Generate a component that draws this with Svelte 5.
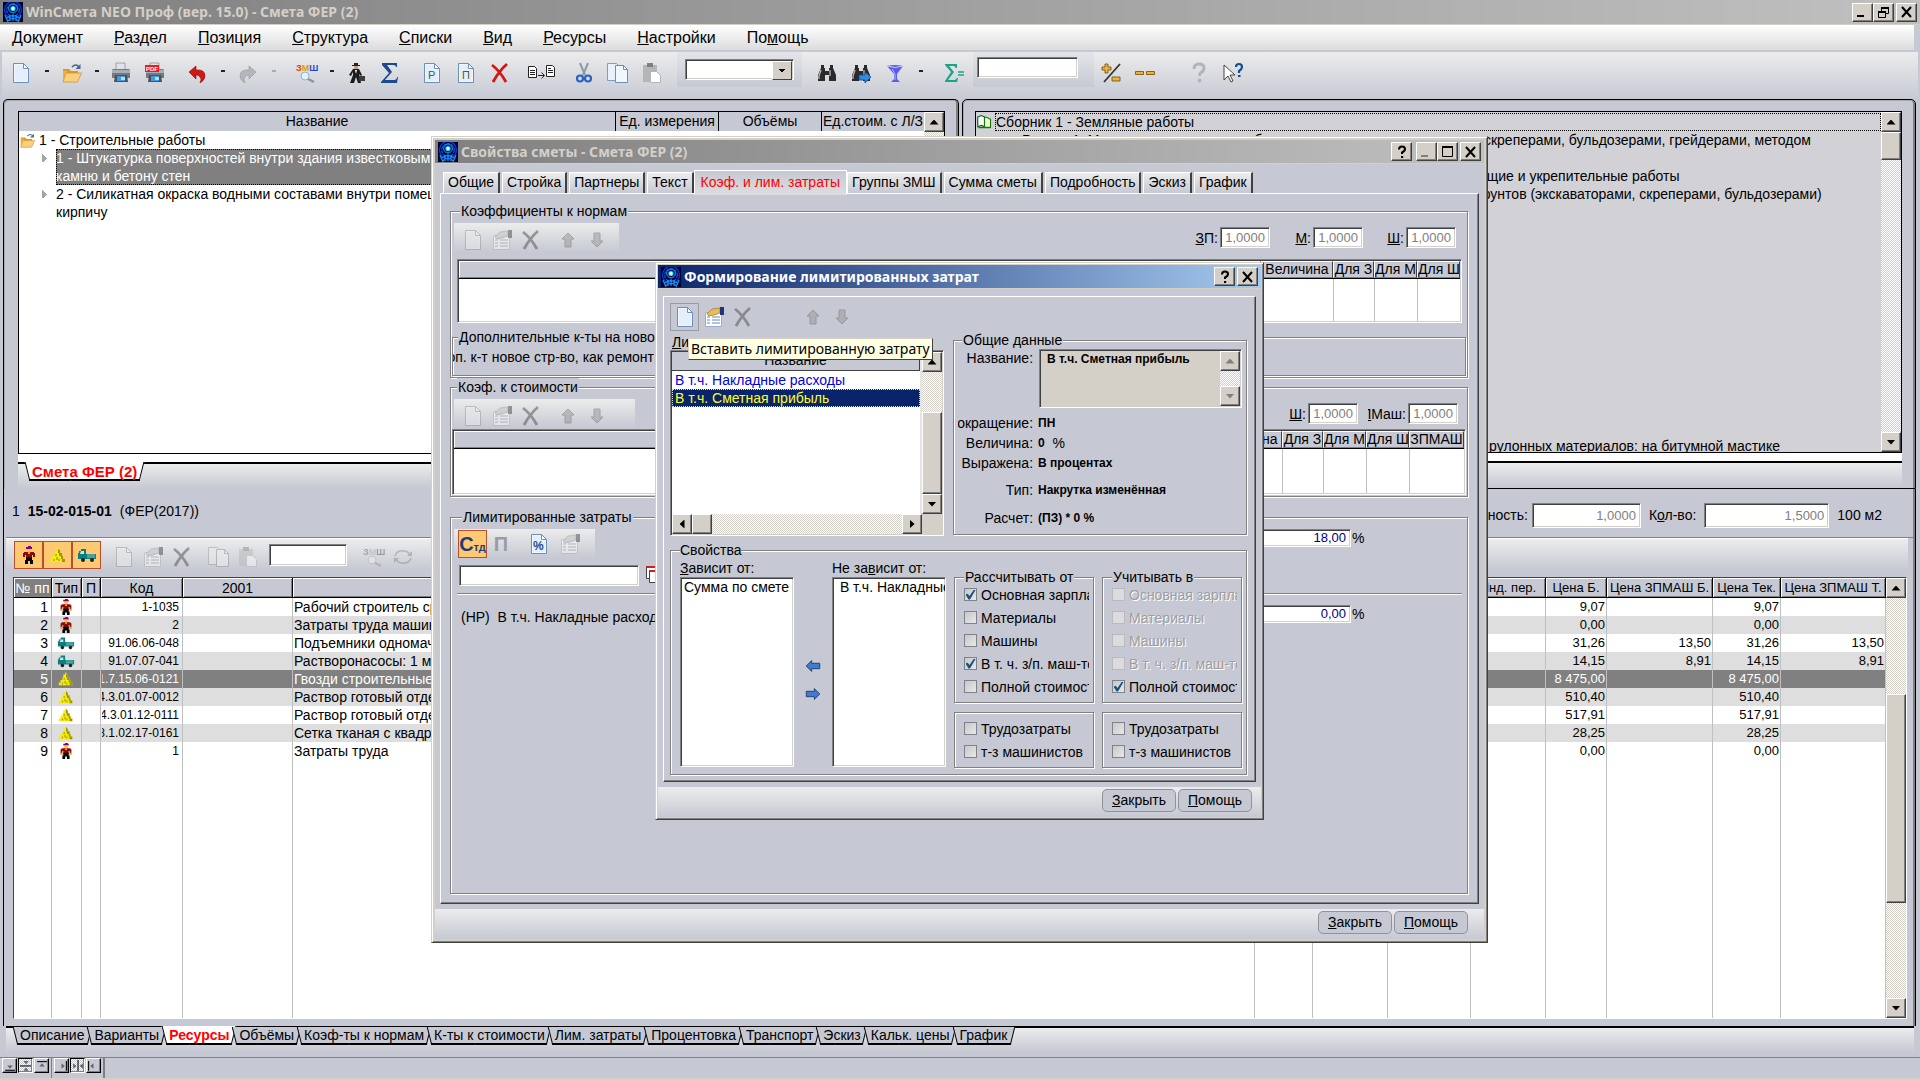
<script lang="ts">
	type Resource = { kind: string; code: string; name: string; base: string; baseZp: string; cur: string; curZp: string };

	const menu = ['&Документ', '&Раздел', '&Позиция', '&Структура', '&Списки', '&Вид', '&Ресурсы', '&Настройки', 'По&мощь'];

	const resources: Resource[] = [
		{ kind: 'worker', code: '1-1035', name: 'Рабочий строитель среднего разряда 3,5', base: '9,07', baseZp: '', cur: '9,07', curZp: '' },
		{ kind: 'worker', code: '2', name: 'Затраты труда машинистов', base: '0,00', baseZp: '', cur: '0,00', curZp: '' },
		{ kind: 'truck', code: '91.06.06-048', name: 'Подъемники одномачтовые, грузоподъемность до 500 кг', base: '31,26', baseZp: '13,50', cur: '31,26', curZp: '13,50' },
		{ kind: 'truck', code: '91.07.07-041', name: 'Растворонасосы: 1 м3/ч', base: '14,15', baseZp: '8,91', cur: '14,15', curZp: '8,91' },
		{ kind: 'heap', code: '01.7.15.06-0121', name: 'Гвозди строительные с плоской головкой', base: '8 475,00', baseZp: '', cur: '8 475,00', curZp: '' },
		{ kind: 'heap', code: '04.3.01.07-0012', name: 'Раствор готовый отделочный тяжелый', base: '510,40', baseZp: '', cur: '510,40', curZp: '' },
		{ kind: 'heap', code: '04.3.01.12-0111', name: 'Раствор готовый отделочный тяжелый', base: '517,91', baseZp: '', cur: '517,91', curZp: '' },
		{ kind: 'heap', code: '08.1.02.17-0161', name: 'Сетка тканая с квадратными ячейками', base: '28,25', baseZp: '', cur: '28,25', curZp: '' },
		{ kind: 'worker', code: '1', name: 'Затраты труда', base: '0,00', baseZp: '', cur: '0,00', curZp: '' }
	];
	const selectedRow = 4;

	const catalog = [
		'Раздел 1. Механизированная разработка всех грунтов экскаваторами, скреперами, бульдозерами, грейдерами, методом',
		'гидромеханизации',
		'Раздел 2. Другие виды земляных работ, подготовительные, сопутствующие и укрепительные работы',
		'Таблица 01-01-001. Разработка, перемещение и укладка нескальных грунтов (экскаваторами, скреперами, бульдозерами)',
		...Array(13).fill(''),
		'Устройство гидроизоляции фундаментов и подвалов из наплавляемых рулонных материалов: на битумной мастике'
	];

	const sheetTabs = ['Описание', 'Варианты', 'Ресурсы', 'Объёмы', 'Коэф-ты к нормам', 'К-ты к стоимости', 'Лим. затраты', 'Процентовка', 'Транспорт', 'Эскиз', 'Кальк. цены', 'График'];
	const propTabs = ['Общие', 'Стройка', 'Партнеры', 'Текст', 'Коэф. и лим. затраты', 'Группы ЗМШ', 'Сумма сметы', 'Подробность', 'Эскиз', 'График'];

	const calcFrom = [
		{ text: 'Основная зарплата', on: true },
		{ text: 'Материалы', on: false },
		{ text: 'Машины', on: false },
		{ text: 'В т. ч. з/п. маш-тов', on: true },
		{ text: 'Полной стоимости', on: false }
	];
	const countIn = calcFrom.map((c, i) => ({ text: c.text, on: i === 4, off: i !== 4 }));
	const labour = ['Трудозатраты', 'т-з машинистов'];
</script>

{#snippet mnemonic(s: string)}{@const i = s.indexOf('&')}{#if i < 0}{s}{:else}{s.slice(0, i)}<u>{s[i + 1]}</u>{s.slice(i + 2)}{/if}{/snippet}

{#snippet logo()}
	<svg class="logo" viewBox="0 0 20 20" aria-hidden="true">
		<rect width="20" height="20" fill="#00002c" />
		<g fill="none" stroke-width="1.200">
			<circle cx="10" cy="8" r="8.500" stroke="#0040f0" />
			<circle cx="10" cy="8" r="6.300" stroke="#0860ff" stroke-dasharray="3 1" />
			<path d="M4 16q6-5 12 0M5 18.500q5-4 10 0M2 13q2 5 3 7M18 13q-2 5-3 7M7 13v6M13 13v6M10 12v7" stroke="#1898ff" />
		</g>
		<circle cx="10" cy="6.500" r="4.400" fill="#001060" stroke="#20a8ff" />
		<circle cx="10" cy="6.500" r="2.600" fill="#28d8ff" />
		<circle cx="10" cy="6.500" r="1.400" fill="#fff" />
	</svg>
{/snippet}

{#snippet icon(name: string)}
	<svg class="icon" viewBox="0 0 20 20" aria-hidden="true">
		{#if name === 'new' || name === 'new-r' || name === 'new-p' || name === 'percent'}
			<path d="M2.500.500h10l5 5v14h-15z" fill="#f2f7fe" stroke="#6d8fc0" />
			<path d="M4 2v16h12V7h-4V2z" fill="#dfebfb" opacity=".7" />
			<path d="M12.500.500v5h5z" fill="#fff" stroke="#6d8fc0" />
			{#if name === 'new-r'}<text x="6" y="16" font-size="11" fill="#1a6a6a">Р</text>{/if}
			{#if name === 'new-p'}<text x="6" y="16" font-size="11" fill="#5a5a10">П</text>{/if}
			{#if name === 'percent'}<text x="4" y="16" font-size="12" font-weight="bold" fill="#1d4a90">%</text>{/if}
		{:else if name === 'open'}
			<path d="M1 6h6l2 2h7v4H1z" fill="#d99a2c" />
			<path d="M1 19V8h4v2h11l-3 9z" fill="#eeb048" />
			<path d="M4 10h15.500l-4 9H1z" fill="#fbd07c" stroke="#d8962c" stroke-width=".8" />
			<path d="M10 4q4-4 7 0" fill="none" stroke="#44688f" stroke-width="1.500" />
			<path d="M18.500 1v5h-5z" fill="#44688f" />
		{:else if name === 'print' || name === 'pdf'}
			<path d="M5 0h9v8H5z" fill="#dfe3e8" stroke="#888" stroke-width=".7" />
			<path d="M1 7q0-1 2-1h14q2 0 2 1v8H1z" fill="#74797f" />
			<path d="M1 7h18v3H1z" fill="#a9aeb4" />
			<path d="M4 12h12l1 7H3z" fill="#4c5157" />
			<path d="M6 13h8v5H6z" fill="#3f9be8" /><path d="M10 14h4v3h-4z" fill="#aee0ff" />
			{#if name === 'pdf'}
				<path d="M0 2h14v7H0z" fill="#f01c10" />
				<text x="1" y="8" font-size="6" font-weight="bold" fill="#fff">PDF</text>
			{/if}
		{:else if name === 'undo'}
			<path d="M2 9L9 3v4q9-1 9 6 0 4-5 7 2-4 0-6-1-2-4-2v4z" fill="#cf1717" stroke="#8a0808" stroke-width=".6" />
		{:else if name === 'redo'}
			<path d="M18 9L11 3v4q-9-1-9 6 0 4 5 7-2-4 0-6 1-2 4-2v4z" fill="#b4b7ba" stroke="#94979b" stroke-width=".6" />
		{:else if name === 'zmsh'}
			<text x="-1" y="8" font-size="9" font-weight="bold"><tspan fill="#e23a10">З</tspan><tspan fill="#d9a000">М</tspan><tspan fill="#1848d0">Ш</tspan></text>
			<circle cx="8" cy="13" r="4" fill="#e4f2ff" stroke="#8fb3d6" />
			<path d="M11 16l6 3" stroke="#8c96a0" stroke-width="2.500" />
		{:else if name === 'man'}
			<path d="M6 2h8v1H6zM8 0h4v2H8z" fill="#222" /><path d="M8 3h4v3H8z" fill="#c9a184" />
			<path d="M7 6h6l3 6-1 1-2-2 2 9h-3l-2-6-2 6H4l3-8V9l-2 4-2-1z" fill="#1b1b1b" />
			<path d="M9 7h2l-1 4z" fill="#fff" /><path d="M13 13h6v5h-6z" fill="#3c3c3c" />
		{:else if name === 'sigma'}
			<path d="M2 0h15v4h-1q0-2-3-2H7l5 7-7 8h9q3 0 3-3h1l-1 6H1v-1l8-9-7-8z" fill="#1c4a8c" />
		{:else if name === 'delete'}
			<path d="M2 2q8 6 14 17M17 1Q9 8 3 19" fill="none" stroke="#d41515" stroke-width="2.800" />
		{:else if name === 'transfer'}
			<path d="M-3.500 3.500h6l2 2v9h-8zM14.500 2.500h6l2 2v9h-8z" fill="#fff" stroke="#222" />
			<path d="M-2 7.500h5M-2 9.500h5M-2 11.500h5M16 5.500h3M16 7.500h5M16 9.500h5M6 12.500h6M9.500 9.500l3 3-3 3" fill="none" stroke="#222" />
		{:else if name === 'cut'}
			<path d="M6 0l5 12M14 0L9 12" stroke="#8d99a6" stroke-width="2" />
			<circle cx="6" cy="15.500" r="3" fill="none" stroke="#2a62c4" stroke-width="2.200" />
			<circle cx="14" cy="15.500" r="3" fill="none" stroke="#2a62c4" stroke-width="2.200" />
		{:else if name === 'copy'}
			<path d="M-.500.500h9l3 3v14h-12z" fill="#eaf1fb" stroke="#7f9cc4" />
			<path d="M7.500 2.500h8l4 4v13h-12z" fill="#f2f7fe" stroke="#6d8fc0" /><path d="M15.500 2.500v4h4z" fill="#fff" stroke="#6d8fc0" />
		{:else if name === 'paste'}
			<path d="M1 2h14v17H1z" fill="#b4b6ba" /><path d="M5 0h6v4H5z" fill="#7e8084" />
			<path d="M8.500 8.500h6l4 4v7h-10z" fill="#fff" stroke="#b4b4b8" />
		{:else if name === 'find' || name === 'find-next'}
			<path d="M4 2h3v3h1v3h4V5h1V2h3v3l3 7v6h-7v-6H8v6H1v-6l3-7z" fill="#2a2a2c" />
			<path d="M4 7l-2 6v3M13 7v6" stroke="#b8b8bc" stroke-width="1.300" fill="none" />
			{#if name === 'find-next'}<path d="M8 12h6V9l6 5-6 6v-3H8z" fill="#2f8ce4" stroke="#0c4a94" stroke-width=".8" />{/if}
		{:else if name === 'funnel'}
			<path d="M2 3q8-2 16 0l-6 8v5l3 3H6l3-3v-5z" fill="#5a5cf0" /><path d="M2 3q8 3 16 0" stroke="#c8caff" fill="none" />
			<path d="M7 6l3 5v6" stroke="#b4b6ff" fill="none" />
		{:else if name === 'sum'}
			<path d="M1 1h12v4h-1l-2-2H5l5 6-6 8h7l2-2h1l-1 4H1v-1l6-9-6-7z" fill="#1fa386" /><path d="M14 9h6M14 12h6" stroke="#1fa386" stroke-width="1.500" />
		{:else if name === 'plusminus'}
			<path d="M19 1L3 19" stroke="#333" stroke-width="1.800" />
			<path d="M4 1h3v3h3v3H7v3H4V7H1V4h3zM11 14h8v4h-8z" fill="#f0b232" stroke="#6a4c08" stroke-width=".8" />
		{:else if name === 'dashes'}
			<path d="M.500 8.500h8v3h-8zM11.500 8.500h8v3h-8z" fill="#f0b232" stroke="#6a4c08" stroke-width=".8" />
		{:else if name === 'help'}
			<path d="M5 6q0-5 5-5t5 4q0 3-3.500 5-1 1-1 3" fill="none" stroke="#b2b4b8" stroke-width="3" /><circle cx="10.500" cy="17.500" r="2" fill="#b2b4b8" />
		{:else if name === 'whatsthis'}
			<path d="M1 2v15l4-4 3 6 2-1-3-6h5z" fill="#fff" stroke="#333" stroke-width=".9" />
			<path d="M13 4q0-3 3-3t3 3q0 2-3 4v2" fill="none" stroke="#14508c" stroke-width="2.200" /><path d="M15 12h2.500v2H15z" fill="#14508c" />
		{:else if name === 'props'}
			<path d="M1.500 5.500h16v14h-16z" fill="#fff" stroke="#9aaed0" />
			<path d="M3 10h3M3 13h3M3 16h3M8 10h8M8 13h8M8 16h8" stroke="#6c86b4" />
			<path d="M3 7l5-5 8-1v5l-6 2-5 1z" fill="#e8bc58" stroke="#a47418" stroke-width=".7" /><path d="M16 0h4v8h-4z" fill="#22337c" />
		{:else if name === 'up' || name === 'down'}
			<path d={name === 'up' ? 'M10 3l6 6h-3v8H7V9H4z' : 'M10 17l6-6h-3V3H7v8H4z'} fill="#8e9094" stroke="#5c5e62" />
		{:else if name === 'left' || name === 'right'}
			<path d={name === 'left' ? 'M2.500 10l6-6v3h9v6h-9v3z' : 'M17.500 10l-6-6v3h-9v6h9v3z'} fill="#3f7cd0" stroke="#1f3a70" />
		{:else if name === 'refresh'}
			<path d="M2 9q2-6 9-5 4 0 6 4M18 11q-2 6-9 5-4 0-6-4" fill="none" stroke="#808288" stroke-width="1.500" />
			<path d="M19 4v5h-5zM1 16v-5h5z" fill="#808288" />
		{:else if name === 'worker'}
			<path d="M7 2h6v2H7zM9 1h3v1H9z" fill="#840084" /><path d="M8 4h4v3H8z" fill="#ffcc18" />
			<path d="M5 7h10v1h1v6h-2v-4h-1v3H7v-3H6v4H4V8h1z" fill="#8c0a0a" /><path d="M9 7h2v2H9z" fill="#f0a030" />
			<path d="M7 12h6v3h1v4h-3v-3H9v3H6v-4h1z" fill="#000" /><path d="M4 12h2v2H4zM14 12h2v2h-2z" fill="#ffcc18" />
		{:else if name === 'heap'}
			<path d="M9 3h2v2h1v3h2v3h1v3h2v3H2v-3h2v-3h2V8h1V5h2z" fill="#f4ec10" />
			<path d="M11 4v1h1v3h2v3h1v3h2v3h-3v-3h-1v-3h-2V8h-1V4z" fill="#a09408" />
			<path d="M8 9v2M6 14v2M9 12v3M11 14v2" stroke="#8d8606" />
		{:else if name === 'truck'}
			<path d="M4 4h5v5h10v5H1V8h1V6h2z" fill="#0b8080" /><path d="M4 6h3v3H3z" fill="#c8e8e8" />
			<path d="M10 10h8M10 12h8" stroke="#9ed0d0" stroke-width=".8" />
			<circle cx="6" cy="15" r="2" fill="#222" /><circle cx="15" cy="15" r="2" fill="#222" />
		{:else if name === 'book'}
			<path d="M1 4l5-2 4 2v13l-4-2-5 2z" fill="#fff" stroke="#0a5c0a" stroke-width="1.500" />
			<path d="M10 4l4 1 4 2v11h-8z" fill="#fffbd0" stroke="#0a7c0a" stroke-width="1.500" /><path d="M2 18h16" stroke="#0a7c0a" stroke-width="2" />
		{:else if name === 'cards'}
			<path d="M1.500 1.500h13v12h-13z" fill="#fff" stroke="#444" /><path d="M1 1h14v2H1z" fill="#d02020" />
			<path d="M4.500 5.500h13v12h-13z" fill="#fff" stroke="#444" /><path d="M4 5h14v2H4z" fill="#d02020" />
		{/if}
	</svg>
{/snippet}

{#snippet tool(name: string, label: string, cls = '')}
	<button type="button" class="tool {cls}" aria-label={label}>{@render icon(name)}</button>
{/snippet}

{#snippet drop(cls = '')}
	<button type="button" class="drop {cls}" aria-label="Ещё"></button>
{/snippet}

{#snippet arrow(dir: string, dim = false)}
	<button type="button" class="sb-btn" class:dim aria-label="Прокрутка"><i class="tri {dir}"></i></button>
{/snippet}

{#snippet vscroll(before: number, thumb: number, after: number, dim = false)}
	<div class="vscroll">
		{@render arrow('t-up', dim)}
		<div style:flex-grow={before}></div>
		{#if thumb}<div class="thumb" style:flex-grow={thumb}></div>{/if}
		<div style:flex-grow={after}></div>
		{@render arrow('t-down', dim)}
	</div>
{/snippet}

{#snippet winBtn(kind: string, dim = false)}
	<button type="button" class="win-btn" class:dim class:close={kind === 'close'} aria-label={kind}>
		<svg viewBox="0 0 16 14" aria-hidden="true" fill="none" stroke="currentColor">
			{#if kind === 'min'}<path d="M2 11h7" stroke-width="2" />
			{:else if kind === 'max'}<path d="M2.500 2v9.500h10V2" /><path d="M2 2h11" stroke-width="2" />
			{:else if kind === 'restore'}<path d="M5 3h8M2 7h8" stroke-width="2" /><path d="M5.500 3v3M12.500 3v5.500H10M2.500 7v5.500h7V7" />
			{:else if kind === 'help'}<path d="M5 4.500q0-3 3-3t3 2.500q0 2-3 3.500v1.500M7 12h2.200" stroke-width="2" />
			{:else}<path d="M3 2l9 10M12 2l-9 10" stroke-width="2" />{/if}
		</svg>
	</button>
{/snippet}

{#snippet editTools()}
	{@render tool('new', 'Добавить', 'off')}
	{@render tool('props', 'Свойства', 'off')}
	{@render tool('delete', 'Удалить', 'off')}
	{@render tool('up', 'Выше', 'off gap')}
	{@render tool('down', 'Ниже', 'off')}
{/snippet}

{#snippet coef(label: string, cls = '')}
	<label class="coef {cls}"><span class="cap"><span>{@render mnemonic(label)}</span></span><input class="num" value="1,0000" disabled /></label>
{/snippet}

{#snippet check(text: string, on: boolean, off = false)}
	<label class="check" class:off><input type="checkbox" checked={on} disabled={off} /><span>{text}</span></label>
{/snippet}

<div class="app">
	<header class="titlebar">
		{@render logo()}
		<h1>WinСмета NEO Проф (вер. 15.0) - Смета ФЕР (2)</h1>
		{@render winBtn('min')}{@render winBtn('restore')}{@render winBtn('close')}
	</header>

	<nav class="menu">
		{#each menu as item}<button type="button">{@render mnemonic(item)}</button>{/each}
	</nav>

	<div class="toolbar">
		{@render tool('new', 'Создать')}{@render drop()}
		{@render tool('open', 'Открыть')}{@render drop('slim')}
		{@render tool('print', 'Печать')}{@render tool('pdf', 'PDF')}
		{@render tool('undo', 'Отменить', 'lead')}{@render drop()}
		{@render tool('redo', 'Вернуть')}{@render drop('pale')}
		{@render tool('zmsh', 'ЗМШ', 'lead')}{@render drop('slim')}
		{@render tool('man', 'Работник')}{@render tool('sigma', 'Итоги')}
		{@render tool('new-r', 'Раздел', 'lead')}{@render tool('new-p', 'Позиция')}{@render tool('delete', 'Удалить')}
		{@render tool('transfer', 'Перенести', 'lead')}{@render tool('cut', 'Вырезать', 'lead')}{@render tool('copy', 'Копировать')}{@render tool('paste', 'Вставить')}
		<div class="well"><span class="combo"><select aria-label="Поиск"><option></option></select></span></div>
		{@render tool('find', 'Найти')}{@render tool('find-next', 'Найти далее')}
		{@render tool('funnel', 'Фильтр')}{@render drop()}
		{@render tool('sum', 'Сумма', 'lead')}
		<div class="well narrow"><input class="box" aria-label="Сумма" /></div>
		{@render tool('plusminus', 'Изменить')}{@render tool('dashes', 'Убрать')}
		{@render tool('help', 'Справка', 'lead-l')}{@render tool('whatsthis', 'Что это')}
	</div>

	<main class="panes">
		<section class="pane">
			<div class="frame">
				<div class="tree">
					<div class="tree-head"><span class="grow">Название</span><span class="c1">Ед. измерения</span><span class="c1">Объёмы</span><span class="c1">Ед.стоим. с Л/З</span></div>
					<ul>
						<li class="root">{@render icon('open')}1 - Строительные работы</li>
						<li><i class="twist"></i><span class="sel">1 - Штукатурка поверхностей внутри здания известковым раствором простая по<br />камню и бетону стен</span></li>
						<li><i class="twist"></i><span>2 - Силикатная окраска водными составами внутри помещений по штукатурке и<br />кирпичу</span></li>
					</ul>
				</div>
				{@render vscroll(0, 0, 1)}
			</div>
			<div class="sheets">
				<button type="button" class="sheet active doc">Смета ФЕР (2)</button>
			</div>
		</section>
		<section class="pane second">
			<div class="frame lilac">
				<ul class="catalog">
					<li class="top">{@render icon('book')}<span>Сборник 1 - Земляные работы</span></li>
					{#each catalog as row}<li>{row}</li>{/each}
				</ul>
				{@render vscroll(0, 28, 290)}
			</div>
			<div class="sheets"></div>
		</section>
	</main>

	<section class="lower">
		<div class="info">
			<div class="position"><span>1</span><b>15-02-015-01</b><span>(ФЕР(2017))</span></div>
			<label><span>Вероятность:</span><input class="num big" value="1,0000" disabled /></label>
			<label><span>К<u>о</u>л-во:</span><input class="num big wide" value="1,5000" disabled /></label>
			<span>100 м2</span>
		</div>
		<div class="toolbar small">
			<div class="toggles">
				{#each ['worker', 'heap', 'truck'] as k}<button type="button" class="toggle" aria-label={k}>{@render icon(k)}</button>{/each}
			</div>
			{@render tool('new', 'Добавить', 'off')}{@render tool('props', 'Свойства', 'off')}{@render tool('delete', 'Удалить', 'off')}
			{@render tool('copy', 'Копировать', 'off gap')}{@render tool('paste', 'Вставить', 'off')}
			<input class="box short" aria-label="Поиск ресурса" />
			{@render tool('zmsh', 'ЗМШ', 'off')}{@render tool('refresh', 'Обновить', 'off')}
		</div>
		<div class="grid-box">
			<table class="grid">
				<colgroup>
					<col class="w-n" /><col class="w-t" /><col class="w-p" /><col class="w-c" /><col class="w-y" /><col /><col class="w-a" /><col class="w-b" /><col class="w-d" /><col class="w-b" /><col class="w-b1" /><col class="w-zb" /><col class="w-tk" /><col class="w-zt" />
				</colgroup>
				<thead>
					<tr>
						<th class="cur">№ пп</th><th>Тип</th><th>П</th><th>Код</th><th>2001</th><th>Наименование</th><th>Ед.изм.</th><th>Кол-во</th><th>Объём</th><th>Инд. пер.</th><th>Цена Б.</th><th>Цена ЗПМАШ Б.</th><th>Цена Тек.</th><th>Цена ЗПМАШ Т.</th>
					</tr>
				</thead>
				<tbody>
					{#each resources as r, i}
						<tr class:sel={i === selectedRow}>
							<td class="r">{i + 1}</td><td class="pic">{@render icon(r.kind)}</td><td></td>
							<td><div class="code">{r.code}</div></td><td></td><td>{r.name}</td><td></td><td></td><td></td><td></td>
							<td class="r n">{r.base}</td><td class="r n">{r.baseZp}</td><td class="r n">{r.cur}</td><td class="r n">{r.curZp}</td>
						</tr>
					{/each}
					<tr class="rest">{#each Array(14) as _}<td></td>{/each}</tr>
				</tbody>
			</table>
			{@render vscroll(96, 209, 95)}
		</div>
	</section>

	<div class="sheets bottom">
		{#each sheetTabs as t}<button type="button" class="sheet" class:active={t === 'Ресурсы'}>{t}</button>{/each}
	</div>

	<footer class="status">
		<div class="splitters">
			<button type="button" aria-label="Вниз"><svg viewBox="0 0 12 11"><path d="M2 9.500h9" stroke="#000" /><path d="M4 5h5L6.500 8z" fill="#666" /></svg></button>
			<button type="button" class="on" aria-label="Поровну"><svg viewBox="0 0 12 11"><path d="M1 5.500h10" stroke="#000" /><path d="M4 1h5L6.500 4zM4 10h5L6.500 7z" fill="#666" /></svg></button>
			<button type="button" aria-label="Вверх"><svg viewBox="0 0 12 11"><path d="M2 1.500h9" stroke="#000" /><path d="M4 6h5L6.500 3z" fill="#666" /></svg></button>
		</div>
		<div class="splitters">
			<button type="button" aria-label="Вправо"><svg viewBox="0 0 12 11"><path d="M10.500 1v9" stroke="#000" /><path d="M6 3v5l3-2.500z" fill="#666" /></svg></button>
			<button type="button" class="on" aria-label="Пополам"><svg viewBox="0 0 12 11"><path d="M6.500 0v11" stroke="#000" /><path d="M2 3v5l3-2.500zM11 3v5L8 5.500z" fill="#666" /></svg></button>
			<button type="button" aria-label="Влево"><svg viewBox="0 0 12 11"><path d="M1.500 1v9" stroke="#000" /><path d="M6 3v5L3 5.500z" fill="#666" /></svg></button>
		</div>
		<div class="hint"></div>
	</footer>
</div>

<div class="window props" role="dialog" aria-label="Свойства сметы">
	<header class="titlebar">
		{@render logo()}
		<h2>Свойства сметы - Смета ФЕР (2)</h2>
		{@render winBtn('help')}<span class="sep"></span>{@render winBtn('min', true)}{@render winBtn('max')}{@render winBtn('close')}
	</header>
	<div class="body">
		<div class="tabs">
			{#each propTabs as t, i}<button type="button" class="tab" class:active={i === 4}>{t}</button>{/each}
		</div>
		<div class="page">
			<fieldset class="norms">
				<legend>Коэффициенты к нормам</legend>
				<div class="line">
					<div class="strip">{@render editTools()}</div>
					<span class="grow"></span>
					{@render coef('&ЗП:')}{@render coef('&М:')}{@render coef('&Ш:')}
				</div>
				<div class="mini inset">
					<div class="mini-row"><span class="grow"></span><span class="m-v">Величина</span><span class="m-z">Для З</span><span class="m-m">Для М</span><span class="m-m">Для Ш</span></div>
					<div class="mini-body"><span class="grow"></span><span class="m-v"></span><span class="m-z"></span><span class="m-m"></span><span class="m-m"></span></div>
				</div>
				<fieldset class="extra">
					<legend>Дополнительные к-ты на новое строительство</legend>
					<div class="clip"><span>Доп. к-т новое стр-во, как ремонт</span></div>
				</fieldset>
			</fieldset>
			<fieldset class="costs">
				<legend>Коэф. к стоимости</legend>
				<div class="line">
					<div class="strip wider">{@render editTools()}</div>
					<span class="grow"></span>
					{@render coef('&Ш:', 'tight')}{@render coef('З&ПМаш:', 'cut')}
				</div>
				<div class="mini">
					<div class="mini-row"><span class="grow"></span><span class="m-v">Величина</span><span class="m-z">Для З</span><span class="m-m">Для М</span><span class="m-m">Для Ш</span><span class="m-zp">ЗПМАШ</span></div>
					<div class="mini-body"><span class="grow"></span><span class="m-v"></span><span class="m-z"></span><span class="m-m"></span><span class="m-m"></span><span class="m-zp"></span></div>
				</div>
			</fieldset>
			<fieldset class="limits">
				<legend>Лимитированные затраты</legend>
				<div class="line">
					<div class="strip lim">
						<button type="button" class="toggle std">С<small>тд</small></button>
						<button type="button" class="letter">П</button>
						{@render tool('percent', 'Процент')}{@render tool('props', 'Свойства', 'off')}
					</div>
					<span class="grow"></span>
					<label class="rate"><input class="num navy" value="18,00" aria-label="Ставка" />%</label>
				</div>
				<div class="pick"><input class="box" aria-label="Затрата" />{@render icon('cards')}</div>
				<hr />
				<div class="line second">
					<span class="grow">(НР)&nbsp; В т.ч. Накладные расходы</span>
					<label class="rate"><input class="num navy" value="0,00" aria-label="Ставка" />%</label>
				</div>
			</fieldset>
		</div>
		<div class="actions">
			<button type="button">{@render mnemonic('&Закрыть')}</button>
			<button type="button">{@render mnemonic('&Помощь')}</button>
		</div>
	</div>
</div>

<div class="window limited" role="dialog" aria-label="Формирование лимитированных затрат">
	<header class="titlebar live">
		{@render logo()}
		<h2>Формирование лимитированных затрат</h2>
		{@render winBtn('help')}{@render winBtn('close')}
	</header>
	<div class="body">
		<div class="page">
			<div class="strip bare">
				{@render tool('new', 'Вставить', 'hot')}{@render tool('props', 'Свойства')}{@render tool('delete', 'Удалить', 'off')}
				{@render tool('up', 'Выше', 'off gap-l')}{@render tool('down', 'Ниже', 'off')}
			</div>
			<div class="cols">
				<div class="picker">
					<span class="caption"><u>Л</u>имитированные затраты:</span>
					<div class="tooltip" role="tooltip">Вставить лимитированную затрату</div>
					<div class="list-box">
						<div class="list-main">
							<div class="list-head">Название</div>
							<ul>
								<li>В т.ч. Накладные расходы</li>
								<li class="sel">В т.ч. Сметная прибыль</li>
							</ul>
						</div>
						{@render vscroll(41, 82, 0)}
						<div class="hscroll">{@render arrow('t-left')}<div class="thumb"></div><span class="grow"></span>{@render arrow('t-right')}</div>
						<div class="corner"></div>
					</div>
				</div>
				<fieldset class="general">
					<legend>Общие данные</legend>
					<div class="pair tall">
						<label for="cost-name">Название:</label>
						<div class="memo"><textarea id="cost-name" readonly>В т.ч. Сметная прибыль</textarea>{@render vscroll(0, 0, 1, true)}</div>
					</div>
					<div class="pair"><span class="key"><span>Сокращение:</span></span><b>ПН</b></div>
					<div class="pair"><span class="key"><span>Величина:</span></span><b>0</b>&nbsp; %</div>
					<div class="pair"><span class="key"><span>Выражена:</span></span><b>В процентах</b></div>
					<div class="pair apart"><span class="key"><span>Тип:</span></span><b>Накрутка изменённая</b></div>
					<div class="pair apart"><span class="key"><span>Расчет:</span></span><b>(ПЗ) * 0 %</b></div>
				</fieldset>
			</div>
			<fieldset class="traits">
				<legend>Свойства</legend>
				<div class="dep">
					<span>{@render mnemonic('&Зависит от:')}</span>
					<ul class="box-list"><li>Сумма по смете</li></ul>
				</div>
				<div class="movers">{@render tool('left', 'Добавить')}{@render tool('right', 'Убрать')}</div>
				<div class="dep">
					<span>{@render mnemonic('Не за&висит от:')}</span>
					<ul class="box-list"><li>&nbsp;В т.ч. Накладные расходы</li></ul>
				</div>
				<div class="flags">
					<fieldset>
						<legend>Рассчитывать от</legend>
						{#each calcFrom as c}{@render check(c.text, c.on)}{/each}
					</fieldset>
					<fieldset class="plain">{#each labour as l}{@render check(l, false)}{/each}</fieldset>
				</div>
				<div class="flags">
					<fieldset>
						<legend>Учитывать в</legend>
						{#each countIn as c}{@render check(c.text, c.on, c.off)}{/each}
					</fieldset>
					<fieldset class="plain">{#each labour as l}{@render check(l, false)}{/each}</fieldset>
				</div>
			</fieldset>
		</div>
		<div class="actions">
			<button type="button">{@render mnemonic('&Закрыть')}</button>
			<button type="button">{@render mnemonic('&Помощь')}</button>
		</div>
	</div>
</div>

<style>
	:global(body) {
		background: #c6c9d3;
		font-family: 'Liberation Sans', Arial, sans-serif;
		font-size: 14px;
		line-height: 18px;
		color: #000;
		overflow: hidden;
	}

	:global(*) {
		box-sizing: border-box;
	}

	button,
	input,
	select,
	textarea {
		font: inherit;
		color: inherit;
		margin: 0;
		padding: 0;
		border: 0;
		border-radius: 0;
		background: none;
	}

	ul {
		list-style: none;
		margin: 0;
		padding: 0;
	}

	.app {
		display: flex;
		flex-direction: column;
		height: 100vh;
	}

	.grow {
		flex: 1;
	}

	.icon {
		display: block;
		width: 20px;
		height: 20px;
		flex: none;
		overflow: visible;
	}

	/* title bars */
	.titlebar {
		display: flex;
		align-items: center;
		flex: none;
		height: 25px;
		padding: 0 3px;
		background: linear-gradient(90deg, #808080, #c0c0c0);
		border-bottom: 1px solid #d4d0c8;
		color: #d4d0c8;
	}

	.window .titlebar {
		height: 24px;
	}

	.titlebar.live {
		background: linear-gradient(90deg, #0a246a, #a6caf0);
		color: #fff;
	}

	.logo {
		width: 20px;
		height: 20px;
		margin-right: 3px;
	}

	h1,
	h2 {
		flex: 1;
		margin: 0;
		font: bold 14px/20px 'Noto Sans', 'Open Sans', sans-serif;
		white-space: nowrap;
	}

	.win-btn,
	.sb-btn,
	.thumb {
		background: #d4d0c8;
		border: 1px solid;
		border-color: #fff #404040 #404040 #fff;
		box-shadow: inset -1px -1px 0 #808080;
		color: #000;
	}

	.win-btn {
		display: grid;
		place-items: center;
		width: 21px;
		height: 19px;
	}

	.win-btn.close {
		margin-left: 2px;
	}

	.win-btn.dim {
		color: #808080;
	}

	.win-btn svg {
		width: 16px;
		height: 14px;
	}

	.sep {
		width: 4px;
	}

	/* menu and toolbars */
	.menu {
		display: flex;
		gap: 31px;
		flex: none;
		height: 25px;
		margin-right: 6px;
		padding: 0 12px;
		background: linear-gradient(#fff, #dcdcdc);
		font-size: 16px;
	}

	.toolbar {
		display: flex;
		align-items: flex-start;
		flex: none;
		height: 48px;
		margin: 2px 2px 0;
		padding: 0 2px;
		background: linear-gradient(#ececec, #c6c9d3);
	}

	.tool {
		display: grid;
		place-items: center;
		width: 34px;
		height: 41px;
		flex: none;
	}

	.drop {
		width: 17px;
		height: 40px;
	}

	.drop.slim {
		width: 15px;
	}

	.drop::after {
		content: '';
		display: block;
		width: 4px;
		margin: -2px auto 0;
		border-top: 2px solid #222;
	}

	.drop.pale::after {
		border-color: #aaa;
	}

	.tool.lead {
		margin-left: 8px;
	}

	.tool.lead-l {
		margin-left: 20px;
	}

	.tool.off .icon {
		filter: grayscale(1);
		opacity: 0.45;
	}

	.well {
		display: flex;
		align-items: center;
		width: 125px;
		height: 35px;
		margin: 0 8px;
		padding: 0 8px;
		background: linear-gradient(#e4e5e9, #c6c9d3);
	}

	.well.narrow {
		align-items: flex-start;
		width: 121px;
		margin: 0 0 0 2px;
		padding: 5px 16px 0 4px;
	}

	.combo {
		position: relative;
		flex: 1;
	}

	select,
	.box,
	.num,
	.memo,
	.list-box,
	.box-list,
	.mini {
		border: 1px solid;
		border-color: #808080 #fff #fff #808080;
		box-shadow:
			inset 1px 1px 0 #404040,
			inset -1px -1px 0 #d4d0c8;
		background: #fff;
	}

	select {
		display: block;
		width: 100%;
		height: 21px;
		appearance: none;
	}

	.combo::after {
		content: '';
		position: absolute;
		top: 2px;
		right: 2px;
		width: 18px;
		height: 17px;
		background:
			conic-gradient(from -45deg at 50% 80%, #000 90deg, #0000 0) center / 8px 4px no-repeat,
			#d4d0c8;
		border: 1px solid;
		border-color: #fff #404040 #404040 #fff;
		pointer-events: none;
	}

	.box {
		flex: 1;
		min-width: 0;
		height: 21px;
	}

	.num {
		width: 50px;
		height: 21px;
		padding: 0 4px;
		text-align: right;
		font-size: 13px;
	}

	.num:disabled {
		color: #808080;
	}

	/* upper panes */
	.panes {
		display: flex;
		gap: 3px;
		flex: 393 1 0;
		min-height: 0;
		margin: -1px 4px 0 3px;
	}

	.pane {
		display: flex;
		flex-direction: column;
		flex: 1 1 0;
		min-width: 0;
		padding: 11px 13px 0 14px;
		border: 1px solid #000;
		border-bottom: 0;
		border-radius: 5px 5px 0 0;
		box-shadow:
			inset 1px 1px 0 #a8aaa8,
			inset -2px 0 0 #808080;
	}

	.pane.second {
		padding-left: 12px;
		border-bottom: 1px solid #000;
	}

	.frame {
		display: flex;
		flex: 1;
		min-height: 0;
		border: 1px solid #000;
		background: #fff;
		overflow: hidden;
	}

	.lilac {
		background: #d2d1d6;
	}

	.tree {
		flex: 1;
		min-width: 0;
		white-space: nowrap;
		overflow: hidden;
	}

	.tree-head {
		display: flex;
		height: 19px;
		background: #c6c9d3;
		text-align: center;
	}

	.tree-head span + span {
		border-left: 1px solid #000;
	}

	.c1 {
		width: 103px;
	}

	.tree li {
		display: flex;
		padding-left: 21px;
	}

	.tree .root {
		align-items: center;
		gap: 4px;
		padding-left: 1px;
		height: 18px;
	}

	.root .icon,
	.top .icon {
		width: 15px;
		height: 15px;
	}

	.twist {
		width: 16px;
		flex: none;
		background: conic-gradient(from 225deg at 100% 50%, #a4a4a4 90deg, #0000 0) 2px 5px / 5px 8px no-repeat;
	}

	.sel {
		flex: 1;
		background: #808080;
		color: #fff;
		outline: 1px dotted #000;
		outline-offset: -1px;
	}

	.catalog {
		flex: 1;
		min-width: 0;
		white-space: nowrap;
		overflow: hidden;
	}

	.catalog li {
		height: 18px;
		padding-left: 46px;
	}

	.catalog .top {
		display: flex;
		align-items: center;
		gap: 3px;
		height: 19px;
		padding-left: 1px;
	}

	.top span {
		flex: 1;
		outline: 1px dotted #000;
		outline-offset: -1px;
		padding-left: 1px;
	}

	/* scroll bars */
	.vscroll,
	.hscroll {
		display: flex;
		flex: none;
		background: repeating-conic-gradient(#fff 0 25%, #d4d0c8 0 50%) 0 0 / 2px 2px;
	}

	.vscroll {
		flex-direction: column;
		width: 20px;
	}

	.sb-btn {
		display: grid;
		place-items: center;
		width: 20px;
		height: 20px;
		flex: none;
	}

	.tri {
		width: 9px;
		height: 5px;
		background: #000;
	}

	.dim .tri {
		background: #808080;
	}

	.t-up {
		clip-path: polygon(50% 0, 100% 100%, 0 100%);
	}

	.t-down {
		clip-path: polygon(0 0, 100% 0, 50% 100%);
	}

	.t-left,
	.t-right {
		width: 5px;
		height: 9px;
	}

	.t-left {
		clip-path: polygon(0 50%, 100% 0, 100% 100%);
	}

	.t-right {
		clip-path: polygon(0 0, 100% 50%, 0 100%);
	}

	/* sheet tabs */
	.sheets {
		display: flex;
		align-items: flex-start;
		flex: none;
		height: 35px;
		padding-left: 9px;
		border-top: 8px solid #fff;
		background: linear-gradient(#000 2px, #ececec 2px, #c6c9d3 26px);
	}

	.sheets.bottom {
		height: 31px;
		margin: 0 6px;
		border-top: 0;
	}

	.sheet {
		position: relative;
		z-index: 0;
		height: 19px;
		padding: 0 5px 1px;
		line-height: 17px;
		white-space: nowrap;
	}

	.sheet::before,
	.sheet::after {
		content: '';
		position: absolute;
		z-index: -1;
		top: 1px;
		bottom: 0;
		background: #c6c9d3;
		border-bottom: 2px solid #000;
	}

	.sheet::before {
		left: 0;
		right: 40%;
		border-left: 1px solid #000;
		transform: skewX(14deg);
	}

	.sheet::after {
		left: 40%;
		right: 0;
		border-right: 1px solid #000;
		transform: skewX(-14deg);
	}

	.sheet.active {
		color: #f00;
		font-weight: bold;
	}

	.sheet.doc {
		font-size: 15px;
	}

	.sheet.active::before,
	.sheet.active::after {
		top: 0;
		background: #fff;
	}

	/* resources */
	.lower {
		display: flex;
		flex-direction: column;
		flex: 534 1 0;
		min-height: 0;
		margin: 0 4px 0 3px;
		border: solid #000;
		border-width: 0 1px;
		box-shadow: inset -2px 0 0 #808080;
		padding: 0 2px 7px;
	}

	.info {
		display: flex;
		align-items: center;
		gap: 8px;
		height: 49px;
		padding: 4px 31px 0 6px;
		border-bottom: 1px solid #808080;
	}

	.position {
		display: flex;
		flex: 1;
		gap: 8px;
		padding-bottom: 9px;
	}

	.info label {
		display: flex;
		align-items: center;
		gap: 4px;
	}

	.num.big {
		width: 109px;
		height: 25px;
	}

	.num.wide {
		width: 125px;
		margin-left: 4px;
	}

	.toolbar.small {
		align-items: center;
		height: 32px;
		margin: 0 5px 0 0;
		padding-left: 8px;
		border-top: 1px solid #fff;
	}

	.toggles {
		display: flex;
		margin-right: 8px;
	}

	.toggle {
		display: grid;
		place-items: center;
		width: 29px;
		height: 28px;
		border: 1px solid #b8502c;
		background: #ffc873;
	}

	.small .tool {
		width: 29px;
		height: 28px;
		padding-top: 4px;
	}

	.small .tool.gap {
		margin-left: 8px;
	}

	.box.short {
		flex: none;
		width: 78px;
		height: 22px;
		margin: 0 12px 0 7px;
	}

	.grid-box {
		display: flex;
		flex: 1;
		min-height: 0;
		margin: 7px 6px 0 7px;
		border: 1px solid;
		border-color: #404040 #fff #fff #404040;
		background: #fff;
	}

	.grid {
		flex: 1;
		width: 0;
		height: 100%;
		table-layout: fixed;
		border-collapse: separate;
		border-spacing: 0;
	}

	.w-n {
		width: 38px;
	}
	.w-t {
		width: 30px;
	}
	.w-p {
		width: 19px;
	}
	.w-c {
		width: 82px;
	}
	.w-y {
		width: 110px;
	}
	.w-a {
		width: 58px;
	}
	.w-b {
		width: 75px;
	}
	.w-d {
		width: 83px;
	}
	.w-b1 {
		width: 61px;
	}
	.w-zb {
		width: 106px;
	}
	.w-tk {
		width: 68px;
	}
	.w-zt {
		width: 105px;
	}

	th {
		height: 20px;
		padding: 0;
		background: #c6c9d3;
		border: solid #000;
		border-width: 0 1px 1px 0;
		box-shadow:
			inset 1px 1px 0 #fff,
			inset -1px -1px 0 #808080;
		font-weight: normal;
		white-space: nowrap;
		overflow: hidden;
	}

	th:nth-child(n + 10) {
		font-size: 13px;
	}

	th.cur {
		background: #808080;
		color: #fff;
	}

	td {
		height: 18px;
		padding: 0 3px 0 1px;
		line-height: 18px;
		border-right: 1px solid #c0c0c0;
		white-space: nowrap;
		overflow: hidden;
	}

	tr:nth-child(even) td {
		background: #dedede;
	}

	tr.sel td {
		background: #808080;
		color: #fff;
	}

	tr.sel {
		outline: none;
	}

	tr.rest td {
		height: auto;
		background: none;
	}

	.r {
		text-align: right;
	}

	.n {
		padding-right: 1px;
		font-size: 13px;
	}

	.pic .icon {
		width: 18px;
		height: 18px;
		margin: 0 auto;
	}

	.code {
		display: flex;
		justify-content: flex-end;
		overflow: hidden;
		font-size: 12px;
	}

	.status {
		display: flex;
		flex: none;
		height: 23px;
		border-bottom: 2px solid #d4d0c8;
	}

	.splitters {
		display: flex;
		gap: 1px;
		width: 52px;
		padding: 0 0 0 2px;
		border: solid #808080;
		border-width: 1px 1px 0 0;
	}

	.splitters button {
		width: 15px;
		height: 15px;
		border: 1px solid;
		border-color: #fff #000 #000 #fff;
		box-shadow: inset -1px -1px 0 #808080;
	}

	.splitters .on {
		border-color: #000 #fff #fff #000;
		background: repeating-conic-gradient(#fff 0 25%, #c6c9d3 0 50%) 0 0 / 2px 2px;
	}

	.splitters svg {
		display: block;
	}

	.hint {
		flex: 1;
		border: solid #808080;
		border-width: 1px 0 0 1px;
	}

	/* dialogs */
	.window {
		position: absolute;
		border: 1px solid;
		border-color: #d4d0c8 #404040 #404040 #d4d0c8;
		box-shadow:
			inset 1px 1px 0 #fff,
			inset -1px -1px 0 #808080;
		background: #d4d0c8;
	}

	.props {
		top: 136px;
		left: 431px;
		right: 432px;
		padding: 3px;
	}

	.limited {
		top: 262px;
		left: 655px;
		right: 656px;
		padding: 2px;
	}

	.body {
		background: #c6c9d3;
	}

	.props .body {
		padding-top: 6px;
	}

	.limited .body {
		padding-top: 7px;
	}

	.tabs {
		display: flex;
		align-items: flex-end;
		gap: 2px;
		height: 23px;
		padding: 0 8px;
	}

	.tab {
		height: 21px;
		padding: 0 4px 2px;
		border: solid;
		border-width: 1px 2px 0 1px;
		border-color: #fff #404040 #fff #fff;
		background: linear-gradient(#ececec, #c6c9d3);
		white-space: nowrap;
	}

	.tab.active {
		position: relative;
		height: 25px;
		margin: 0 -2px -2px;
		padding: 0 6px 2px;
		border-width: 1px;
		border-color: #fff #fff #dcdde2 #fff;
		background: linear-gradient(#c6c9d3, #dcdde2);
		color: #f00;
	}

	.page {
		border: 1px solid;
		border-color: #fff #404040 #404040 #fff;
		box-shadow: inset -1px -1px 0 #808080;
	}

	.props .page {
		margin: 0 5px;
		padding: 8px 10px 9px 9px;
	}

	.limited .page {
		margin: 0 5px 5px;
		padding: 6px 8px 6px 6px;
	}

	fieldset {
		min-width: 0;
		margin: 0;
		padding: 0;
		border: 1px solid #808080;
		box-shadow:
			1px 1px 0 #fff,
			inset 1px 1px 0 #fff;
	}

	legend {
		margin-left: 8px;
		padding: 0 1px;
		background: #c6c9d3;
		white-space: nowrap;
	}

	.norms {
		padding: 3px 1px 1px;
	}

	.costs {
		padding: 3px 1px 1px;
	}

	.costs legend,
	.extra legend {
		margin-left: 5px;
	}

	.limits {
		height: 386px;
		margin-top: 11px;
		padding: 3px 3px 0;
	}

	.line {
		display: flex;
		align-items: center;
		height: 29px;
	}

	.strip {
		display: flex;
		align-items: center;
		width: 165px;
		height: 29px;
		margin-left: 2px;
		padding: 4px 0 0 4px;
		background: linear-gradient(#ececec, #c6c9d3);
	}

	.strip.wider {
		width: 181px;
	}

	.strip.lim {
		width: 141px;
		margin-left: 0;
		padding-top: 0;
	}

	.strip .tool {
		width: 29px;
		height: 28px;
	}

	.strip .tool.gap {
		margin-left: 8px;
	}

	.coef {
		display: flex;
		align-items: center;
		gap: 2px;
		margin-right: 10px;
	}

	.coef .cap {
		display: flex;
		justify-content: flex-end;
		width: 31px;
		overflow: hidden;
	}

	.coef.cut {
		margin-right: 8px;
	}

	.coef.cut .cap {
		width: 38px;
	}

	.mini {
		height: 66px;
	}

	.mini.inset {
		height: 64px;
		margin: 7px 4px 5px 5px;
	}

	.costs .mini {
		margin-top: 1px;
	}

	.mini-row,
	.mini-body {
		display: flex;
		margin: 1px;
	}

	.mini-row {
		height: 18px;
		margin-bottom: 0;
		border-bottom: 1px solid #000;
		background: #c6c9d3;
		line-height: 15px;
	}

	.mini-row span {
		border: 1px solid;
		border-color: #fff #404040 #808080 #fff;
		text-align: center;
		white-space: nowrap;
		overflow: hidden;
	}

	.mini-body {
		height: calc(100% - 20px);
		margin-top: 0;
	}

	.mini-body span + span {
		border-left: 1px solid #c0c0c0;
	}

	.m-v {
		width: 72px;
	}
	.m-z {
		width: 41px;
	}
	.m-m {
		width: 43px;
	}
	.m-zp {
		width: 55px;
	}

	.extra {
		height: 48px;
	}

	.clip {
		display: flex;
		justify-content: flex-end;
		width: 201px;
		margin-top: 2px;
		overflow: hidden;
		white-space: nowrap;
	}

	.std {
		display: flex;
		align-items: baseline;
		justify-content: center;
		padding-top: 2px;
		color: #1d3c78;
		font-weight: bold;
		font-size: 20px;
		line-height: 22px;
	}

	.std small {
		font-size: 11px;
	}

	.letter {
		width: 28px;
		color: #9a9ca2;
		font-weight: bold;
		font-size: 20px;
	}

	.lim .tool {
		margin-left: 9px;
	}

	.lim .tool + .tool {
		margin-left: 2px;
	}

	.rate {
		display: flex;
		align-items: center;
		align-self: flex-start;
		gap: 1px;
		width: 213px;
	}

	.rate .num {
		width: 100px;
		height: 18px;
	}

	.navy {
		color: #000080;
	}

	.pick {
		display: flex;
		gap: 6px;
		margin: 7px 0 0 5px;
	}

	.pick .box {
		flex: none;
		width: 180px;
	}

	hr {
		height: 2px;
		margin: 7px 2px 10px 3px;
		border: 0;
		border-top: 1px solid #808080;
		background: #fff;
	}

	.line.second {
		height: 23px;
		margin-left: 7px;
	}

	.actions {
		display: flex;
		justify-content: flex-end;
		gap: 2px;
		height: 30px;
		margin-top: 5px;
		padding: 2px 16px 0;
		background: linear-gradient(#ececec, #c6c9d3);
	}

	.limited .actions {
		padding-right: 9px;
	}

	.actions button {
		width: 74px;
		height: 23px;
		padding-bottom: 1px;
		border: 1px solid #909298;
		border-radius: 5px;
		background: #c6c9d3;
	}

	/* limited costs */
	.strip.bare {
		width: auto;
		height: 28px;
		margin: 0;
		padding: 0;
		background: none;
	}

	.tool.hot {
		border: 1px solid #9a9ca2;
	}

	.strip .tool.gap-l {
		margin-left: 41px;
	}

	.cols {
		display: flex;
		gap: 9px;
	}

	.picker {
		position: relative;
		display: flex;
		flex-direction: column;
		flex: 275 1 0;
		min-width: 0;
		padding-top: 2px;
	}

	.caption {
		padding-left: 2px;
	}

	.tooltip {
		position: absolute;
		z-index: 2;
		top: 7px;
		left: 18px;
		padding: 0 2px;
		border: 1px solid #404040;
		border-color: #d4d0c8 #404040 #404040 #d4d0c8;
		background: #ffffe1;
		font: 14px/20px 'Noto Sans', 'Open Sans', sans-serif;
		white-space: nowrap;
	}

	.list-box {
		display: grid;
		grid-template: 162px 20px / 1fr 20px;
		margin-top: -1px;
		padding: 1px;
	}

	.list-head {
		height: 19px;
		border: solid #404040;
		border-width: 0 1px 1px 0;
		background: #c6c9d3;
		line-height: 16px;
		text-align: center;
	}

	.list-main {
		border-right: 2px solid #e4e4e4;
		overflow: hidden;
	}

	.list-main li {
		padding-left: 3px;
		color: #0000e0;
	}

	.list-main .sel {
		background: #0a246a;
		color: #ffff20;
		outline-color: #ddd;
	}

	.hscroll .thumb {
		width: 20px;
	}

	.corner {
		background: #d4d0c8;
	}

	.general {
		flex: 293 1 0;
		height: 204px;
	}

	.pair {
		display: flex;
		align-items: center;
		height: 20px;
		padding-left: 4px;
	}

	.pair.tall {
		align-items: flex-start;
		height: 64px;
		padding-right: 4px;
	}

	.pair.tall label {
		width: 75px;
		flex: none;
		margin-right: 6px;
		text-align: right;
	}

	.pair.apart {
		height: 28px;
		padding-top: 6px;
	}

	.key {
		display: flex;
		justify-content: flex-end;
		width: 75px;
		margin-right: 5px;
		overflow: hidden;
	}

	.pair b,
	textarea {
		font-weight: bold;
		font-size: 12px;
	}

	.memo {
		display: flex;
		flex: 1;
		min-width: 0;
		height: 59px;
		padding: 1px;
		background: #d4d0c8;
	}

	textarea {
		flex: 1;
		min-width: 0;
		padding-left: 6px;
		resize: none;
		overflow: hidden;
		line-height: 16px;
	}

	.traits {
		display: flex;
		height: 234px;
		margin-top: 5px;
		padding: 0 4px 0 9px;
	}

	.traits > legend {
		margin-left: 0;
		padding: 0;
	}

	.dep {
		display: flex;
		flex-direction: column;
		width: 114px;
		height: 208px;
	}

	.box-list {
		flex: 1;
		padding: 0 3px;
		overflow: hidden;
		white-space: nowrap;
	}

	.movers {
		display: flex;
		flex-direction: column;
		justify-content: center;
		width: 38px;
		padding-top: 26px;
	}

	.movers .tool {
		width: 38px;
		height: 28px;
	}

	.movers .icon {
		width: 18px;
		height: 18px;
	}

	.flags {
		display: flex;
		flex-direction: column;
		gap: 9px;
		flex: 1;
		min-width: 0;
		margin: 9px 0 0 8px;
	}

	.flags fieldset {
		display: flex;
		flex-direction: column;
		gap: 6px;
		height: 135px;
		padding: 0 4px 0 9px;
	}

	.flags legend {
		margin-left: 0;
	}

	.flags .plain {
		height: 56px;
		padding-top: 7px;
	}

	.check {
		display: flex;
		align-items: center;
		gap: 4px;
		height: 17px;
		overflow: hidden;
		white-space: nowrap;
	}

	.check.off {
		color: #9c9ea4;
		text-shadow: 1px 1px 0 #fff;
	}

	.check input {
		display: grid;
		place-items: center;
		width: 13px;
		height: 13px;
		flex: none;
		appearance: none;
		border: 1px solid #80828a;
		background: linear-gradient(135deg, #c8c8c8, #e8e8e8);
	}

	.check.off input {
		border-color: #b8babf;
		background: #dcdcde;
	}

	.check input:checked::before {
		content: '';
		width: 10px;
		height: 10px;
		background: #1a5082;
		clip-path: polygon(0 50%, 22% 42%, 40% 65%, 85% 0, 100% 5%, 45% 100%, 30% 100%);
	}
</style>
